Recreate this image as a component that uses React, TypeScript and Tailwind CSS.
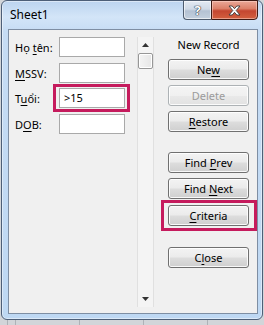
import React from 'react';

function Btn({ children, disabled }: { children: React.ReactNode; disabled?: boolean }) {
  return (
    <button
      type="button"
      className={`flex h-[21px] w-[81px] items-center justify-center rounded-[3px] border text-[11px] leading-none shadow-[inset_0_0_0_1px_rgba(255,255,255,0.85)] ${
        disabled
          ? 'border-[#adb2b5] bg-[linear-gradient(#f4f4f4_0%,#f0f0f0_50%,#e9e9e9_51%,#e2e2e2_100%)] text-[#9b9b9b]'
          : 'border-[#707070] bg-[linear-gradient(#f3f3f3_0%,#ebebeb_48%,#dddddd_52%,#cfcfcf_100%)] text-black'
      }`}
    >
      <span>{children}</span>
    </button>
  );
}

function Field({ label, value, mark }: { label: React.ReactNode; value?: string; mark?: boolean }) {
  return (
    <div className="flex h-[20px] items-center">
      <div className="w-[44px] text-[11px] leading-none text-black">{label}</div>
      <div className="relative">
        <div className="flex h-[20px] w-[66px] items-center border border-[#a9a9a9] bg-white pl-[4px] text-[11px] text-black">
          {value}
        </div>
        {mark && <div className="absolute -bottom-[4px] -left-[6px] -right-[5px] -top-[4px] border-[3px] border-[#c51b5d]" />}
      </div>
    </div>
  );
}

const u = 'underline decoration-1 underline-offset-[2px]';

export default function App() {
  return (
    <div className="h-[325px] w-[264px] overflow-hidden bg-[repeating-linear-gradient(90deg,#aeb2b7_0px,#aeb2b7_1px,#d2d5d9_1px,#d2d5d9_64px)] bg-[position:15px_0] pl-[1px] font-['Noto_Sans',sans-serif]">
      <div className="flex h-[320px] w-[262px] flex-col rounded-[6px] border border-[#4d5f78] bg-[linear-gradient(180deg,#bcd4f0_0px,#d3e5f8_16px,#c6dcf4_30px,#bed8f3_100%)] shadow-[inset_0_0_0_1px_rgba(255,255,255,0.45)]">
        {/* title bar */}
        <div className="flex h-[28px] items-start justify-between">
          <div className="pl-[8px] pt-[6px] text-[12px] leading-[16px] text-black">Sheet1</div>
          <div className="-mt-[1px] mr-[4px] flex h-[20px]">
            <div className="flex w-[28px] items-center justify-center rounded-bl-[4px] border border-r-0 border-[#4e5c6e] bg-[linear-gradient(#e3eaf3_0%,#d0dae6_45%,#b4c2d3_55%,#c3d0de_100%)] shadow-[inset_0_0_0_1px_rgba(255,255,255,0.6)]">
              <span className="text-[13px] font-bold leading-none text-white [text-shadow:0_0_1px_#2d3640,0_0_1px_#2d3640,0_0_1px_#2d3640]">?</span>
            </div>
            <div className="flex w-[47px] items-center justify-center rounded-br-[4px] border border-[#3e1a14] bg-[linear-gradient(#eaa898_0%,#dc8069_42%,#c44630_55%,#d3603f_100%)] shadow-[inset_0_0_0_1px_rgba(255,220,210,0.5)]">
              <svg width="13" height="11" viewBox="0 0 13 11">
                <path
                  d="M1 1h3.2L6.5 3.7 8.8 1H12L8.2 5.5 12 10H8.8L6.5 7.3 4.2 10H1l3.8-4.5z"
                  fill="#fff"
                  stroke="#3b3b3b"
                  strokeWidth="0.9"
                  strokeLinejoin="round"
                />
              </svg>
            </div>
          </div>
        </div>

        {/* client area */}
        <div className="ml-[6px] mr-[4px] flex h-[285px] border border-[#7e8ea3] bg-[#f0f0f0]">
          {/* fields */}
          <div className="flex w-[128px] flex-col pl-[6px] pt-[7px]">
            <Field label={<>Họ <span className={u}>t</span>ên:</>} />
            <div className="mt-[6px]"><Field label={<><span className={u}>M</span>SSV:</>} /></div>
            <div className="mt-[5px]"><Field label={<>T<span className={u}>u</span>ổi:</>} value=">15" mark /></div>
            <div className="mt-[6px]"><Field label={<>D<span className={u}>O</span>B:</>} /></div>
          </div>

          {/* scrollbar */}
          <div className="mt-[7px] flex h-[270px] w-[17px] flex-col items-center border-x border-[#e0e0e0] bg-[#f4f4f4]">
            <div className="flex h-[16px] items-center justify-center">
              <svg width="7" height="4" viewBox="0 0 7 4"><path d="M3.5 0L7 4H0z" fill="#333" /></svg>
            </div>
            <div className="h-[16px] w-[15px] rounded-[2px] border border-[#979797] bg-[linear-gradient(90deg,#f4f4f4,#e6e6e6)] shadow-[inset_0_0_0_1px_#fff]" />
            <div className="flex-1" />
            <div className="flex h-[16px] items-center justify-center">
              <svg width="7" height="4" viewBox="0 0 7 4"><path d="M0 0h7L3.5 4z" fill="#333" /></svg>
            </div>
          </div>

          {/* buttons */}
          <div className="flex flex-col pl-[14px] pt-[7px]">
            <div className="w-[81px] text-center text-[11px] leading-[16px] text-black">New Record</div>
            <div className="mt-[6px]"><Btn>Ne<span className={u}>w</span></Btn></div>
            <div className="mt-[5px]"><Btn disabled>Delete</Btn></div>
            <div className="mt-[5px]"><Btn><span className={u}>R</span>estore</Btn></div>
            <div className="mt-[20px]"><Btn>Find <span className={u}>P</span>rev</Btn></div>
            <div className="mt-[5px]"><Btn>Find <span className={u}>N</span>ext</Btn></div>
            <div className="relative mt-[6px]">
              <Btn><span className={u}>C</span>riteria</Btn>
              <div className="absolute -bottom-[5px] -left-[7px] -right-[8px] -top-[5px] border-[3px] border-[#c51b5d]" />
            </div>
            <div className="mt-[21px]"><Btn>C<span className={u}>l</span>ose</Btn></div>
          </div>
        </div>
      </div>
    </div>
  );
}
